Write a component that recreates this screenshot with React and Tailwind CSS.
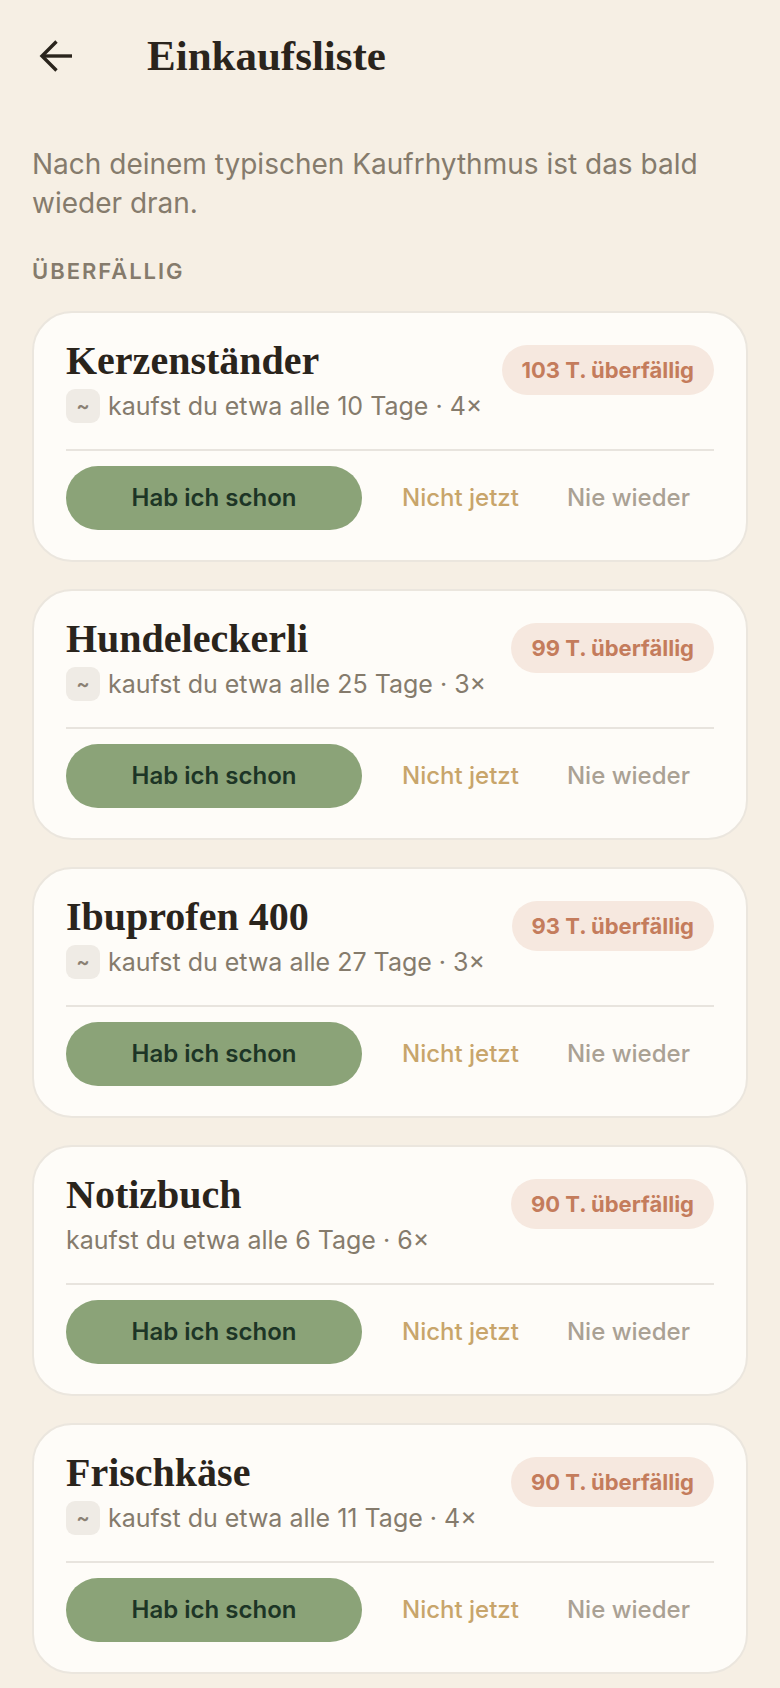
import React from "react";

const items = [
  { name: "Kerzenständer", badge: "103 T. überfällig", sub: "kaufst du etwa alle 10 Tage · 4×", tilde: true },
  { name: "Hundeleckerli", badge: "99 T. überfällig", sub: "kaufst du etwa alle 25 Tage · 3×", tilde: true },
  { name: "Ibuprofen 400", badge: "93 T. überfällig", sub: "kaufst du etwa alle 27 Tage · 3×", tilde: true },
  { name: "Notizbuch", badge: "90 T. überfällig", sub: "kaufst du etwa alle 6 Tage · 6×", tilde: false },
  { name: "Frischkäse", badge: "90 T. überfällig", sub: "kaufst du etwa alle 11 Tage · 4×", tilde: true },
];

const sans = { fontFamily: "Inter, 'Noto Sans', sans-serif" };

function Card({ item }) {
  return (
    <div className="rounded-[40px] border-2 border-[#ebe6de] bg-[#fefcf8] px-[32px] pt-[32px] pb-[30px]">
      <div className="flex items-start justify-between">
        <div className="flex flex-col">
          <div className="font-['Liberation_Serif',serif] text-[40px] leading-[32px] font-bold text-[#2a241c]">
            {item.name}
          </div>
          <div className="mt-[12px] flex h-[34px] items-center">
            {item.tilde && (
              <span className="mr-[8px] flex h-[34px] w-[34px] items-center justify-center rounded-[9px] bg-[#efebe5] text-[20px] font-semibold text-[#8a8073]">
                ~
              </span>
            )}
            <span className="text-[25px] leading-[34px] text-[#857b6c]">{item.sub}</span>
          </div>
        </div>
        <div className="flex h-[50px] items-center rounded-full bg-[#f6e8df] px-[20px] text-[22px] font-bold text-[#c47c5c]">
          {item.badge}
        </div>
      </div>
      <div className="mt-[26px] h-[2px] bg-[#e8e4de]" />
      <div className="mt-[15px] flex items-center">
        <button className="flex h-[64px] w-[296px] items-center justify-center rounded-full bg-[#8ba378] text-[24px] font-semibold text-[#1d3526]">
          Hab ich schon
        </button>
        <button className="ml-[40px] text-[24px] font-medium text-[#c8a56b]">Nicht jetzt</button>
        <button className="ml-[48px] text-[24px] font-medium text-[#aaa194]">Nie wieder</button>
      </div>
    </div>
  );
}

export default function App() {
  return (
    <div className="min-h-screen bg-[#f6efe4]" style={sans}>
      <header className="flex h-[112px] items-center">
        <svg className="ml-[39px]" width="34" height="34" viewBox="0 0 34 34" fill="none">
          <path d="M3 17H33" stroke="#2a241c" strokeWidth="3.4" />
          <path d="M17.5 2.5L3 17L17.5 31.5" stroke="#2a241c" strokeWidth="3.4" strokeLinejoin="miter" />
        </svg>
        <h1 className="ml-[74px] font-['Liberation_Serif',serif] text-[43px] leading-[42px] font-bold text-[#2a241c]">
          Einkaufsliste
        </h1>
      </header>
      <main className="px-[32px] pt-[33px] pb-[20px]">
        <p className="text-[28px] leading-[39px] text-[#857b6c]">
          Nach deinem typischen Kaufrhythmus ist das bald wieder dran.
        </p>
        <div className="mt-[34px] text-[22px] leading-[28px] font-semibold tracking-[0.09em] text-[#857b6c]">
          ÜBERFÄLLIG
        </div>
        <div className="mt-[26px] flex flex-col gap-[27px]">
          {items.map((it) => (
            <Card key={it.name} item={it} />
          ))}
        </div>
      </main>
    </div>
  );
}
